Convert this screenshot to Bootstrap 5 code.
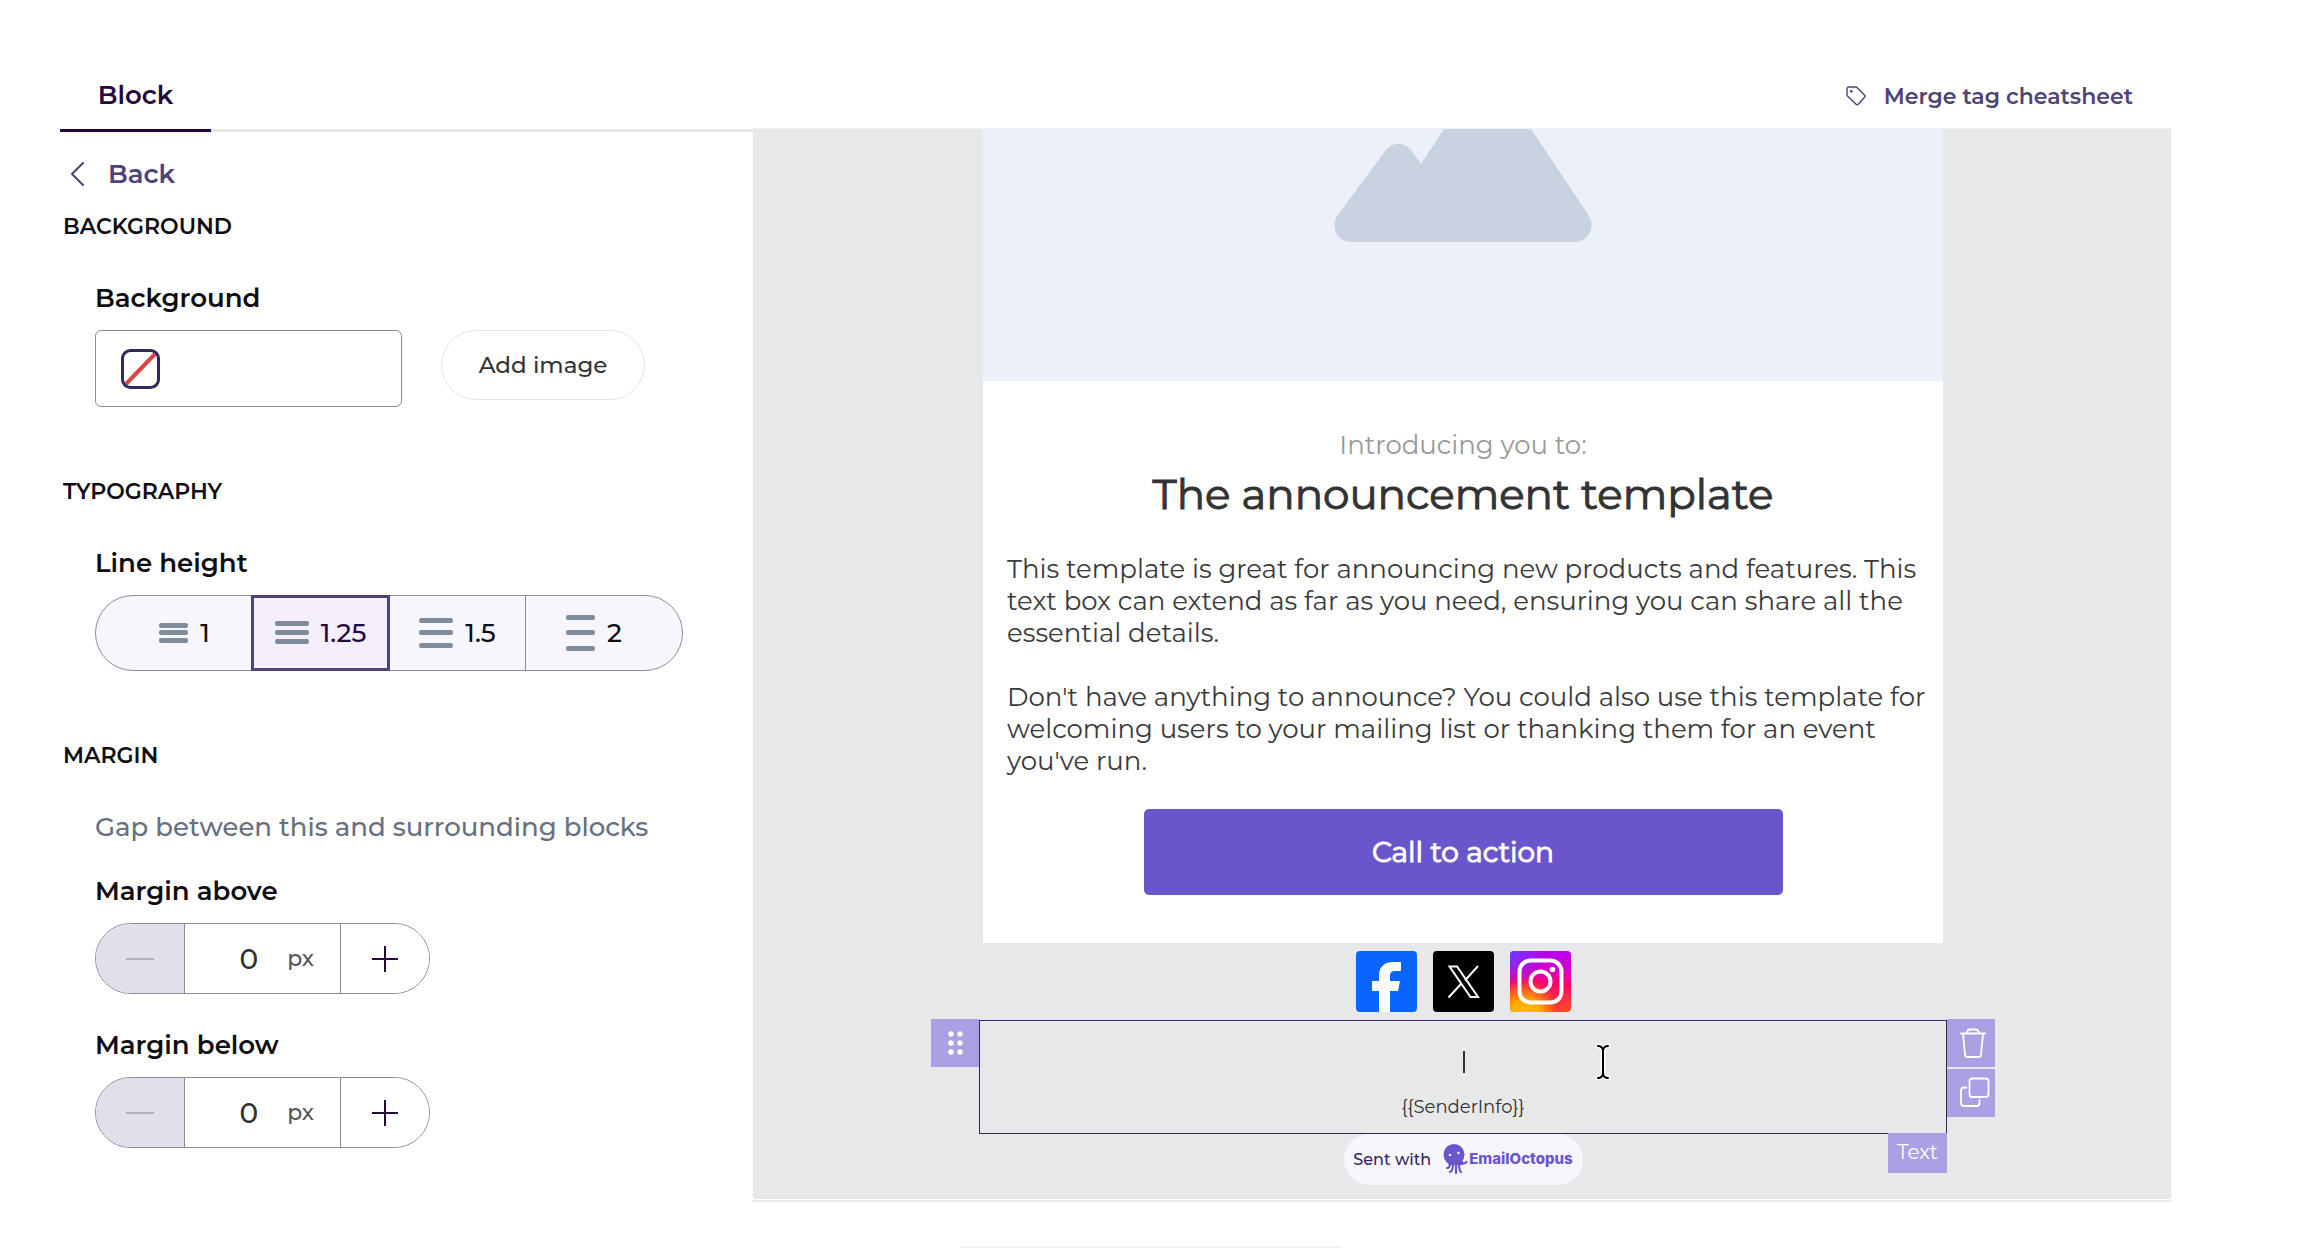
<!DOCTYPE html>
<html lang="en">
<head>
<meta charset="utf-8">
<meta name="viewport" content="width=device-width, initial-scale=1">
<title>Email editor</title>
<link href="https://cdn.jsdelivr.net/npm/bootstrap@5.3.0/dist/css/bootstrap.min.css" rel="stylesheet">
<style>
  :root { --ink:#0f0d12; --plum:#26083d; --violet:#4f4378; --lilac:#ac9fe3; --line:#8f8a9c; --pane:#e6e8e9; }
  body { font-family:Montserrat, Inter, "Liberation Sans", sans-serif; color:var(--ink); background:#fff; }
  .editor { padding:60px 131px 0 60px; }
  .sidebar { flex:0 0 693px; }

  .tabs-line { border-bottom:3px solid #e5e6e8; }
  .tabs-line .nav-link { width:151px; height:72px; margin-bottom:-3px; padding:2px 0 0; border:0; border-bottom:3px solid var(--plum); border-radius:0; color:var(--plum); font-size:26px; font-weight:600; background:none; }
  .back-link { color:var(--violet); font-size:26px; font-weight:600; line-height:32px; padding:26px 0 0 10px; margin-bottom:23px; gap:23px; }
  .back-link:hover { color:var(--plum); }

  .prop-group { margin-bottom:71px; }
  .group-title { font-size:22px; font-weight:600; line-height:28px; margin:0 0 41px; padding-left:3px; }
  .field-area { padding-left:35px; }
  .field-name { font-size:26px; font-weight:600; line-height:32px; margin:0 0 16px; display:block; }
  .hint-line { font-size:26px; font-weight:500; line-height:32px; color:#687080; margin:0 0 32px; }
  .colour-box { width:307px; height:77px; border:1px solid var(--line); border-radius:6px; background:#fff; padding-left:25px; }
  .add-btn { width:204px; height:70px; border:1px solid #e3e3e8; border-radius:36px; font-size:23px; font-weight:500; color:#333; background:#fff; padding:0; margin-left:39px; }

  .lh-group { width:588px; height:76px; border:1px solid var(--line); border-radius:38px; background:#f7f6fc; }
  .lh-group label { width:135px; gap:12px; font-size:26px; font-weight:500; cursor:pointer; }
  .lh-group label svg { fill:#808c9c; }
  .lh-group .lh-first { width:155px; padding-left:22px; }
  .lh-group .lh-last { width:157px; padding-right:20px; border-left:1px solid var(--line); }
  .lh-group .btn-check:checked + label { width:139px; margin:-1px 0; border:3px solid var(--violet); background:#f4eefd; color:var(--plum); }

  .stepper { width:335px; height:71px; border:1px solid var(--line); border-radius:36px; overflow:hidden; }
  .stepper + .field-name { margin-top:35px; }
  .stepper button { width:88px; border:0; background:#fff; padding:0; color:var(--plum); }
  .stepper button:disabled { background:#e2dfea; color:#b3adbf; }
  .stepper .amount { border:solid var(--line); border-width:0 1px; padding-right:26px; gap:29px; }
  .stepper input { width:60px; border:0; padding:0; font-size:28px; font-weight:500; color:#333; text-align:right; background:none; }
  .stepper .unit { font-size:22px; font-weight:500; color:#555; }

  .topbar { height:68px; padding:4px 38px 0 0; }
  .merge-link { color:var(--violet); font-size:22px; font-weight:600; gap:18px; }
  .merge-link:hover { color:var(--plum); }

  .canvas-pane { background:var(--pane); border-top:1px solid #eef3f6; border-bottom:1px solid #fff; box-shadow:0 2px 1px #e8e8ef; padding:0 0 14px 2px; }
  .email { width:960px; }
  .hero { height:252px; background:#ecf0f8; }
  .copy-area { background:#fff; padding:47px 24px 48px; color:#3a3a3a; }
  .intro { font-size:26px; line-height:34px; color:#999; margin:0; }
  .headline { font-size:42px; line-height:54px; font-weight:400; -webkit-text-stroke:1px #333; margin:5px 0 32px; color:#333; }
  .para { font-size:26px; line-height:32px; margin:0; white-space:nowrap; }
  .cta { width:639px; height:86px; border-radius:5px; border:0; background:#6a55cd; color:#fff; font-size:28px; font-weight:400; -webkit-text-stroke:1px #fff; margin-top:32px; }
  .socials { gap:16px; padding:8px 0; }
  .socials a { line-height:0; }

  .text-block { width:968px; height:114px; border:1px solid #2f2a45; border-top-color:#3c2379; margin:0 -4px; padding-top:30px; }
  .tool { width:48px; height:48px; border:0; padding:0; background:var(--lilac); line-height:0; }
  .handle { right:100%; top:-2px; margin-right:1px; }
  .tools-right { left:100%; top:-2px; gap:2px; margin-left:1px; }
  .type-tag { right:-1px; top:100%; width:59px; height:40px; background:var(--lilac); color:#fff; font-size:20px; line-height:38px; text-align:center; }
  .caret { width:2px; height:22px; background:#333; margin-left:2px; }
  .sender { font-size:18px; line-height:24px; color:#333; margin-top:22px; }
  .ibeam { right:334px; top:22px; }
  .sent-pill { width:239px; height:51px; border-radius:26px; background:#f8f6fd; color:#33265c; font-size:16px; font-weight:500; gap:12px; }
  .brand { color:#6a55cd; gap:1px; font-family:Inter, sans-serif; font-size:15px; font-weight:800; }
  .foot-line { width:382px; height:2px; background:#f2f2f4; margin-top:46px; }
</style>
</head>
<body>
<div class="editor">
  <div class="d-flex align-items-start">
    <aside class="sidebar">
      <ul class="nav tabs-line" role="tablist">
        <li class="nav-item" role="presentation"><button class="nav-link active" type="button" role="tab" aria-selected="true">Block</button></li>
      </ul>
      <a href="#" class="back-link d-flex align-items-center text-decoration-none">
        <svg width="15" height="24" viewBox="0 0 15 24" fill="none" stroke="currentColor" stroke-width="2" stroke-linecap="round" stroke-linejoin="round"><path d="M13 1 2 12 13 23"/></svg>
        Back
      </a>

      <section class="prop-group">
        <h2 class="group-title">BACKGROUND</h2>
        <div class="field-area">
          <label class="field-name" for="bgcolour">Background</label>
          <div class="d-flex align-items-start">
            <button id="bgcolour" type="button" class="colour-box d-flex align-items-center">
              <svg width="39" height="40" viewBox="0 0 39 40" fill="none"><path d="M5 35 34 5" stroke="#dd4347" stroke-width="4"/><rect x="1.5" y="1.5" width="36" height="37" rx="8" stroke="#35265f" stroke-width="3"/></svg>
            </button>
            <button type="button" class="add-btn">Add image</button>
          </div>
        </div>
      </section>

      <section class="prop-group">
        <h2 class="group-title">TYPOGRAPHY</h2>
        <div class="field-area">
          <span class="field-name" id="lh-name">Line height</span>
          <div class="lh-group d-flex" role="group" aria-labelledby="lh-name">
            <input type="radio" class="btn-check" name="lh" id="lh1">
            <label for="lh1" class="lh-first d-flex align-items-center justify-content-center">
              <svg width="29" height="36" viewBox="0 0 29 36"><rect y="8" width="29" height="5" rx="2"/><rect y="15" width="29" height="5" rx="2"/><rect y="23" width="29" height="5" rx="2"/></svg>1</label>
            <input type="radio" class="btn-check" name="lh" id="lh125" checked>
            <label for="lh125" class="d-flex align-items-center justify-content-center">
              <svg width="34" height="36" viewBox="0 0 34 36"><rect y="6" width="34" height="5" rx="2"/><rect y="15" width="34" height="5" rx="2"/><rect y="24" width="34" height="5" rx="2"/></svg>1.25</label>
            <input type="radio" class="btn-check" name="lh" id="lh15">
            <label for="lh15" class="d-flex align-items-center justify-content-center">
              <svg width="34" height="36" viewBox="0 0 34 36"><rect y="3" width="34" height="5" rx="2"/><rect y="15" width="34" height="5" rx="2"/><rect y="28" width="34" height="5" rx="2"/></svg>1.5</label>
            <input type="radio" class="btn-check" name="lh" id="lh2">
            <label for="lh2" class="lh-last d-flex align-items-center justify-content-center">
              <svg width="29" height="36" viewBox="0 0 29 36"><rect width="29" height="5" rx="2"/><rect y="15" width="29" height="5" rx="2"/><rect y="31" width="29" height="5" rx="2"/></svg>2</label>
          </div>
        </div>
      </section>

      <section>
        <h2 class="group-title">MARGIN</h2>
        <div class="field-area">
          <p class="hint-line">Gap between this and surrounding blocks</p>
          <label class="field-name" for="m-above">Margin above</label>
          <div class="stepper d-flex">
            <button type="button" disabled aria-label="Decrease margin above"><svg width="28" height="28" stroke="currentColor" stroke-width="2"><path d="M0 14H28"/></svg></button>
            <div class="amount d-flex flex-fill align-items-center justify-content-end"><input id="m-above" type="text" value="0"><span class="unit">px</span></div>
            <button type="button" aria-label="Increase margin above"><svg width="28" height="28" stroke="currentColor" stroke-width="2"><path d="M1 14H27M14 1V27"/></svg></button>
          </div>
          <label class="field-name" for="m-below">Margin below</label>
          <div class="stepper d-flex">
            <button type="button" disabled aria-label="Decrease margin below"><svg width="28" height="28" stroke="currentColor" stroke-width="2"><path d="M0 14H28"/></svg></button>
            <div class="amount d-flex flex-fill align-items-center justify-content-end"><input id="m-below" type="text" value="0"><span class="unit">px</span></div>
            <button type="button" aria-label="Increase margin below"><svg width="28" height="28" stroke="currentColor" stroke-width="2"><path d="M1 14H27M14 1V27"/></svg></button>
          </div>
        </div>
      </section>
    </aside>

    <main class="flex-grow-1">
      <div class="topbar d-flex align-items-center justify-content-end">
        <a href="#" class="merge-link d-flex align-items-center text-decoration-none">
          <svg width="20" height="20" viewBox="0 0 20 20" fill="none" stroke="currentColor" stroke-width="1.4" stroke-linejoin="round"><path d="M1 3Q1 1 3 1H9.500Q10.500 1 11.200 1.700L18.600 9.300Q19.500 10.300 18.600 11.200L12.300 18.200Q11.200 19.300 10.100 18.200L1.700 10.200Q1 9.500 1 8.500Z"/><circle cx="5.300" cy="5.300" r=".7" fill="currentColor"/></svg>
          Merge tag cheatsheet
        </a>
      </div>

      <div class="canvas-pane d-flex justify-content-center">
        <div class="email d-flex flex-column">
          <div class="hero d-flex justify-content-center align-items-start">
            <svg width="258" height="114" viewBox="0 0 258 114" fill="#c9d2e0"><path d="M110 0H197L255 87C262 99 254 113 241 113H17C4 113-4 99 3 87L52 21Q64 8 77 21L87 35Z"/></svg>
          </div>
          <div class="copy-area d-flex flex-column">
            <p class="intro text-center">Introducing you to:</p>
            <h1 class="headline text-center">The announcement template</h1>
            <p class="para">This template is great for announcing new products and features. This<br>text box can extend as far as you need, ensuring you can share all the<br>essential details.<br><br>Don't have anything to announce? You could also use this template for<br>welcoming users to your mailing list or thanking them for an event<br>you've run.</p>
            <button type="button" class="cta align-self-center">Call to action</button>
          </div>

          <div class="socials d-flex justify-content-center">
            <a href="#" aria-label="Facebook"><svg width="61" height="61" viewBox="0 0 61 61"><rect width="61" height="61" rx="4" fill="#0866ff"/><path fill="#fff" d="M23 61V40H16V30H23V25C23 16 28 11 37 11H45V20H40C35 20 34 22 34 25V30H44L42 40H34V61Z"/></svg></a>
            <a href="#" aria-label="X"><svg width="61" height="61" viewBox="0 0 61 61"><rect width="61" height="61" rx="4"/><path fill="none" stroke="#fff" stroke-width="2" d="M16.500 15.500H24L45 46H37.500ZM45 15 32 29.500M28 33 15.500 46.500"/></svg></a>
            <a href="#" aria-label="Instagram"><svg width="61" height="61" viewBox="0 0 61 61">
              <defs>
                <linearGradient id="igBase" x1="0" y1="0" x2="0" y2="1"><stop offset="0" stop-color="#b400f0"/><stop offset=".3" stop-color="#d300c5"/><stop offset=".55" stop-color="#ff0169"/><stop offset=".8" stop-color="#ff3040"/><stop offset="1" stop-color="#ff4d20"/></linearGradient>
                <radialGradient id="igSun" cx=".25" cy="1.050" r=".65"><stop offset="0" stop-color="#ffc400"/><stop offset=".4" stop-color="#ffa800"/><stop offset=".7" stop-color="#ff5a20" stop-opacity=".8"/><stop offset="1" stop-color="#ff0169" stop-opacity="0"/></radialGradient>
                <radialGradient id="igBlue" cx="0" cy="0" r=".6"><stop offset="0" stop-color="#6a3cff"/><stop offset="1" stop-color="#7638fa" stop-opacity="0"/></radialGradient>
              </defs>
              <rect width="61" height="61" rx="4" fill="url(#igBase)"/><rect width="61" height="61" rx="4" fill="url(#igSun)"/><rect width="61" height="61" rx="4" fill="url(#igBlue)"/>
              <g fill="none" stroke="#fff" stroke-width="4"><rect x="9.500" y="9.500" width="42" height="42" rx="11"/><circle cx="30.500" cy="30.500" r="10"/></g><circle cx="42.500" cy="18.500" r="2.800" fill="#fff"/></svg></a>
          </div>

          <div class="text-block position-relative d-flex flex-column align-items-center">
            <button type="button" class="tool handle position-absolute" aria-label="Move block"><svg width="48" height="48" viewBox="0 0 48 48" fill="#fff"><circle cx="20" cy="15" r="2.700"/><circle cx="29" cy="15" r="2.700"/><circle cx="20" cy="24" r="2.700"/><circle cx="29" cy="24" r="2.700"/><circle cx="20" cy="33" r="2.700"/><circle cx="29" cy="33" r="2.700"/></svg></button>
            <div class="tools-right position-absolute d-flex flex-column">
              <button type="button" class="tool" aria-label="Delete block"><svg width="48" height="48" viewBox="0 0 48 48" fill="none" stroke="#fff" stroke-width="1.800" stroke-linecap="round" stroke-linejoin="round"><path d="M14 14.500H38M16 14.500 18 36Q18.300 38 20.500 38H31.500Q33.700 38 34 36L36 14.500M20 14Q20.500 10.500 23 10.500H29Q31 10.500 32 14"/></svg></button>
              <button type="button" class="tool" aria-label="Duplicate block"><svg width="48" height="48" viewBox="0 0 48 48" fill="none" stroke="#fff" stroke-width="1.800" stroke-linecap="round" stroke-linejoin="round"><rect x="22.500" y="9.500" width="19" height="18.500" rx="3"/><path d="M19.500 18.500H17Q14 18.500 14 21.500V34Q14 37 17 37H29.500Q32.500 37 32.500 34V31"/></svg></button>
            </div>
            <span class="caret"></span>
            <div class="sender">{{SenderInfo}}</div>
            <svg class="ibeam position-absolute" width="18" height="38" viewBox="0 0 18 38" fill="none" stroke-linecap="round"><path d="M4 3Q8 3 9 7Q10 3 14 3M9 7V31M4 35Q8 35 9 31Q10 35 14 35" stroke="#fff" stroke-width="5"/><path d="M4 3Q8 3 9 7Q10 3 14 3M9 7V31M4 35Q8 35 9 31Q10 35 14 35" stroke="#000" stroke-width="2"/></svg>
            <span class="type-tag position-absolute">Text</span>
          </div>

          <div class="sent-pill d-flex align-items-center justify-content-center align-self-center">
            <span>Sent with</span>
            <span class="brand d-flex align-items-center">
              <svg width="25" height="31" viewBox="0 0 25 31"><ellipse cx="11" cy="10.500" rx="10.500" ry="10.500" fill="#6a55cd"/><path d="M3 17H20V21H6Z" fill="#6a55cd"/><path d="M7 19Q7 24 4 24M10 20Q10 27 7 28M13 20V29M16 20Q16 26 18 28M18 17Q20 21 23.500 18" fill="none" stroke="#6a55cd" stroke-width="2.200" stroke-linecap="round"/><circle cx="7" cy="11" r="1.200" fill="#fff"/><circle cx="15.500" cy="9" r="1.200" fill="#fff"/></svg>
              EmailOctopus
            </span>
          </div>
        </div>
      </div>
    </main>
  </div>
</div>
<div class="foot-line mx-auto"></div>
<script src="https://cdn.jsdelivr.net/npm/bootstrap@5.3.0/dist/js/bootstrap.bundle.min.js"></script>
</body>
</html>
